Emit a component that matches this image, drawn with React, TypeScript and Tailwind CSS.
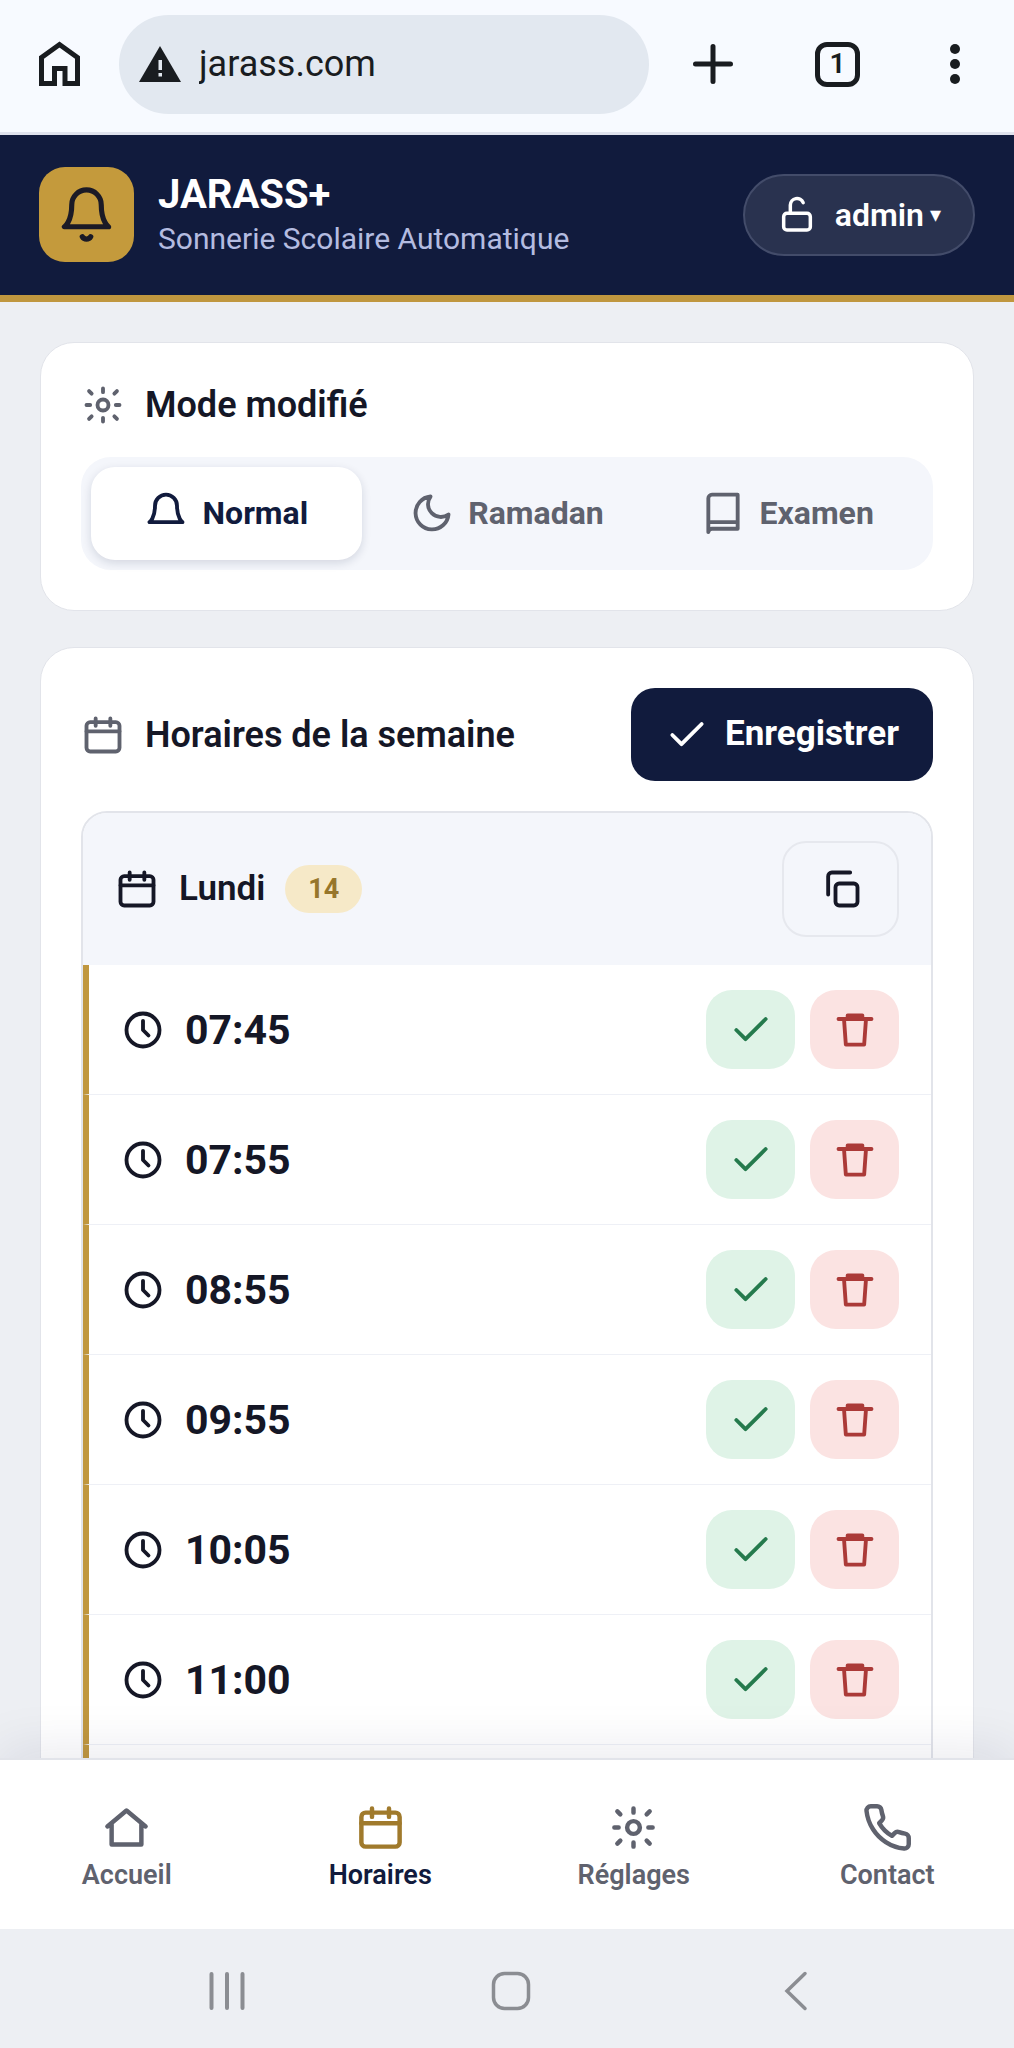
import React, { ReactNode, useState } from "react";

type IconProps = {
  className?: string;
  children: ReactNode;
};

type IconName =
  | "bell"
  | "bellLogo"
  | "moon"
  | "book"
  | "sun"
  | "calendar"
  | "check"
  | "trash"
  | "clock"
  | "copy"
  | "unlock"
  | "home"
  | "phone";

const Svg: React.FC<IconProps> = ({ className, children }) => (
  <svg
    viewBox="0 0 24 24"
    fill="none"
    stroke="currentColor"
    strokeWidth="2.1"
    strokeLinecap="round"
    strokeLinejoin="round"
    aria-hidden="true"
    className={className}
  >
    {children}
  </svg>
);

const shapes: Record<IconName, ReactNode> = {
  bell: <path d="M18 8a6 6 0 0 0-12 0c0 7-3 9-3 9h18s-3-2-3-9" />,
  bellLogo: (
    <>
      <path d="M18 8a6 6 0 0 0-12 0c0 7-3 9-3 9h18s-3-2-3-9" />
      <path d="M13.73 21a2 2 0 0 1-3.46 0" />
    </>
  ),
  moon: <path d="M21 12.79A9 9 0 1 1 11.21 3 7 7 0 0 0 21 12.79z" />,
  book: (
    <path d="M4 22.4V4a2 2 0 0 1 2-2h14v18.6H6a2 2 0 0 0-2 1.8M4.5 17H20" />
  ),
  sun: (
    <>
      <circle cx="12" cy="12" r="3" />
      <path d="M12 3v2M12 19v2M3 12h2M19 12h2M4.4 4.4l1.4 1.4M18.2 18.2l1.4 1.4M4.4 19.6l1.4-1.4M18.2 5.8l1.4-1.4" />
    </>
  ),
  calendar: (
    <>
      <rect x="3" y="5" width="18" height="16" rx="2" />
      <path d="M3 10h18M8 3v4M16 3v4" />
    </>
  ),
  check: <path d="M20 6L9 17l-5-5" />,
  trash: <path d="M3 6h18M8 6V4h8v2M6 6l1 14h10l1-14" />,
  clock: (
    <>
      <circle cx="12" cy="12" r="9" />
      <path d="M12 7v5l3 3" />
    </>
  ),
  copy: (
    <>
      <rect x="9" y="9" width="12" height="12" rx="2" />
      <path d="M5 15V5a2 2 0 0 1 2-2h10" />
    </>
  ),
  unlock: (
    <>
      <rect x="4" y="11" width="16" height="10" rx="2" />
      <path d="M8 11V6a4 4 0 0 1 7.7-1.4" />
    </>
  ),
  home: <path d="M3 11.5L12 4l9 7.5M5 10.5V20h14v-9.5" />,
  phone: (
    <path d="M22 16.92v3a2 2 0 0 1-2.18 2 19.79 19.79 0 0 1-8.63-3.07 19.5 19.5 0 0 1-6-6 19.79 19.79 0 0 1-3.07-8.67A2 2 0 0 1 4.11 2h3a2 2 0 0 1 2 1.72c.13.96.36 1.9.7 2.81a2 2 0 0 1-.45 2.11L8.09 9.91a16 16 0 0 0 6 6l1.27-1.27a2 2 0 0 1 2.11-.45c.91.34 1.85.57 2.81.7A2 2 0 0 1 22 16.92z" />
  ),
};

const Icon: React.FC<{ name: IconName; className?: string }> = ({
  name,
  className = "size-11 shrink-0",
}) => <Svg className={className}>{shapes[name]}</Svg>;

const modes: { id: string; label: string; icon: IconName }[] = [
  { id: "normal", label: "Normal", icon: "bell" },
  { id: "ramadan", label: "Ramadan", icon: "moon" },
  { id: "examen", label: "Examen", icon: "book" },
];

const tabs: { id: string; label: string; icon: IconName }[] = [
  { id: "accueil", label: "Accueil", icon: "home" },
  { id: "horaires", label: "Horaires", icon: "calendar" },
  { id: "reglages", label: "Réglages", icon: "sun" },
  { id: "contact", label: "Contact", icon: "phone" },
];

const initialTimes = ["07:45", "07:55", "08:55", "09:55", "10:05", "11:00"];

const BrowserBar = () => (
  <div className="flex h-[135px] shrink-0 items-center border-b-[3px] border-[#dfe2ed] bg-[#f7faff] px-[35px] pb-1 text-[#191c20]">
    <button type="button" aria-label="Page d'accueil" className="shrink-0">
      <svg viewBox="0 0 48 48" fill="none" className="size-12">
        <path
          d="M6.5 17.5L24.5 4.5l18 13V43.5H30V28.5H19.5V43.5H6.5z"
          stroke="currentColor"
          strokeWidth="5"
        />
      </svg>
    </button>
    <div className="ml-9 flex h-[99px] min-w-0 flex-1 items-center rounded-full bg-[#e2e8f0] px-5">
      <svg viewBox="0 0 42 36" className="h-9 w-[42px] shrink-0">
        <path d="M21 0l21 36H0z" fill="currentColor" />
        <path
          d="M19.5 14h3.5v10h-3.5zM19.5 27h3.5v3.5h-3.5z"
          fill="#e2e8f0"
        />
      </svg>
      <input
        type="text"
        aria-label="Adresse"
        defaultValue="jarass.com"
        className="ml-[18px] w-full min-w-0 bg-transparent text-[36px] outline-none"
      />
    </div>
    <button type="button" aria-label="Nouvel onglet" className="ml-10 shrink-0">
      <svg viewBox="0 0 48 48" className="size-12">
        <path
          d="M24 6.5v35M6.5 24h35"
          stroke="currentColor"
          strokeWidth="5"
          strokeLinecap="round"
        />
      </svg>
    </button>
    <button
      type="button"
      aria-label="Onglets ouverts"
      className="ml-[78px] flex size-[45px] shrink-0 items-center justify-center rounded-[12px] border-[5px] border-current text-[28px] font-semibold"
    >
      1
    </button>
    <button type="button" aria-label="Menu" className="ml-[71px] shrink-0">
      <svg viewBox="0 0 48 48" fill="currentColor" className="size-12">
        <circle cx="24" cy="9" r="5" />
        <circle cx="24" cy="24" r="5" />
        <circle cx="24" cy="39" r="5" />
      </svg>
    </button>
  </div>
);

const Header = () => (
  <header className="flex shrink-0 items-center justify-between border-b-[7px] border-[#c0973f] bg-[#111b3d] px-[39px] pt-8 pb-[33px]">
    <div className="flex items-center gap-6">
      <div className="flex size-[95px] items-center justify-center rounded-[26px] bg-[#c49a3c] text-[#1b1a26]">
        <Icon name="bellLogo" className="size-[59px]" />
      </div>
      <div>
        <h1 className="text-[40px] leading-[48px] font-bold text-white">
          JARASS+
        </h1>
        <p className="text-[30px] leading-10 text-[#b4bce0]">
          Sonnerie Scolaire Automatique
        </p>
      </div>
    </div>
    <button
      type="button"
      className="flex h-[82px] items-center rounded-full border-2 border-[#434c6a] bg-[#29324f] px-8 text-[32px] font-semibold text-white"
    >
      <Icon name="unlock" className="mr-[18px] size-10" />
      admin
      <span className="ml-1.5 font-['DejaVu_Sans'] text-[22px]">▾</span>
    </button>
  </header>
);

const App: React.FC = () => {
  const [mode, setMode] = useState<string>("normal");
  const [tab, setTab] = useState<string>("horaires");
  const [times, setTimes] = useState<string[]>(initialTimes);

  const handleDelete = (time: string) => {
    setTimes(times.filter((t) => t !== time));
  };

  return (
    <div className="flex h-screen flex-col bg-[#edeff3] font-[Roboto,sans-serif] text-[#151726]">
      <BrowserBar />
      <Header />

      <main className="flex min-h-0 flex-1 flex-col gap-9 overflow-y-auto px-10 pt-10 [scrollbar-width:none]">
        <section className="shrink-0 rounded-[34px] border border-[#e2e4ea] bg-white p-10">
          <h2 className="flex h-11 items-center gap-5 text-[36px] font-semibold">
            <Icon name="sun" className="size-11 text-[#5f626e]" />
            Mode modifié
          </h2>
          <div className="mt-[30px] grid grid-cols-3 gap-[10px] rounded-[30px] bg-[#f4f6fb] p-[10px]">
            {modes.map((m) => (
              <button
                key={m.id}
                type="button"
                aria-pressed={mode === m.id}
                onClick={() => setMode(m.id)}
                className={`flex h-[93px] items-center justify-center gap-[14px] rounded-[24px] pb-0.5 text-[32px] font-bold ${
                  mode === m.id
                    ? "bg-white text-[#111b3d] shadow-[0_3px_10px_rgba(17,27,61,0.14)]"
                    : "text-[#5f626e]"
                }`}
              >
                <Icon name={m.icon} />
                {m.label}
              </button>
            ))}
          </div>
        </section>

        <section className="shrink-0 rounded-[34px] border border-[#e2e4ea] bg-white p-10">
          <div className="flex items-center justify-between">
            <h2 className="flex items-center gap-5 text-[36px] font-semibold">
              <Icon name="calendar" className="size-11 text-[#5f626e]" />
              Horaires de la semaine
            </h2>
            <button
              type="button"
              className="flex h-[93px] items-center gap-4 rounded-[24px] bg-[#111b3d] px-[34px] text-[35px] font-bold text-white"
            >
              <Icon name="check" />
              Enregistrer
            </button>
          </div>

          <div className="mt-[30px] overflow-hidden rounded-[26px] border-2 border-[#e2e4ea]">
            <div className="flex items-center justify-between bg-[#f4f6fb] px-8 py-7">
              <h3 className="flex items-center gap-5 text-[35px] font-semibold">
                <Icon name="calendar" />
                Lundi
                <span className="rounded-full bg-[#f6e9c8] px-[23px] py-2 text-[27px] leading-8 font-bold text-[#97762b]">
                  14
                </span>
              </h3>
              <button
                type="button"
                aria-label="Copier la journée"
                className="flex h-24 w-[117px] items-center justify-center rounded-[24px] border-2 border-[#e6e8ee]"
              >
                <Icon name="copy" />
              </button>
            </div>

            <ul>
              {times.map((time) => (
                <li
                  key={time}
                  className="flex items-center justify-between border-b border-l-[6px] border-b-[#eef0f6] border-l-[#c0973f] px-8 py-[25px]"
                >
                  <span className="flex items-center gap-5 text-[41px] leading-[48px] font-bold">
                    <Icon name="clock" />
                    {time}
                  </span>
                  <span className="flex gap-[15px]">
                    <button
                      type="button"
                      aria-label={`Activer ${time}`}
                      className="flex h-[79px] w-[89px] items-center justify-center rounded-[26px] bg-[#dff3e7] text-[#257a4d]"
                    >
                      <Icon name="check" />
                    </button>
                    <button
                      type="button"
                      aria-label={`Supprimer ${time}`}
                      onClick={() => handleDelete(time)}
                      className="flex h-[79px] w-[89px] items-center justify-center rounded-[26px] bg-[#fbe3e2] text-[#ab3a38]"
                    >
                      <Icon name="trash" />
                    </button>
                  </span>
                </li>
              ))}
              <li
                aria-hidden="true"
                className="h-32 border-l-[6px] border-l-[#c0973f]"
              />
            </ul>
          </div>
        </section>
      </main>

      <nav className="relative grid shrink-0 grid-cols-4 border-t-2 border-[#e2e4ea] bg-white pt-[42px] pb-[38px] shadow-[0_-8px_50px_rgba(17,27,61,0.09)]">
        {tabs.map((t) => (
          <button
            key={t.id}
            type="button"
            onClick={() => setTab(t.id)}
            className={`flex flex-col items-center gap-1.5 text-[27px] leading-8 font-semibold ${
              tab === t.id ? "text-[#111b3d]" : "text-[#5f626e]"
            }`}
          >
            <Icon
              name={t.icon}
              className={
                tab === t.id ? "size-[51px] text-[#a07a2c]" : "size-[51px]"
              }
            />
            {t.label}
          </button>
        ))}
      </nav>

      {/* Android navigation keys */}
      <div className="relative grid h-[119px] shrink-0 grid-cols-3 items-center justify-items-center bg-[#edeff3] pt-1 pr-[76px] pl-[85px] text-[#8b8d92]">
        <button type="button" aria-label="Applications récentes">
          <svg viewBox="0 0 40 40" className="size-10">
            <path
              d="M4.5 3v34M20 3v34M35.5 3v34"
              stroke="currentColor"
              strokeWidth="4"
              strokeLinecap="round"
            />
          </svg>
        </button>
        <button type="button" aria-label="Accueil du téléphone">
          <svg viewBox="0 0 40 40" fill="none" className="size-10">
            <rect
              x="2.5"
              y="2.5"
              width="35"
              height="35"
              rx="11"
              stroke="currentColor"
              strokeWidth="3.5"
            />
          </svg>
        </button>
        <button type="button" aria-label="Retour">
          <svg viewBox="0 0 40 40" fill="none" className="size-10">
            <path
              d="M29 2.5L11 20l18 17.5"
              stroke="currentColor"
              strokeWidth="3.5"
              strokeLinecap="round"
            />
          </svg>
        </button>
      </div>
    </div>
  );
};

export default App;
